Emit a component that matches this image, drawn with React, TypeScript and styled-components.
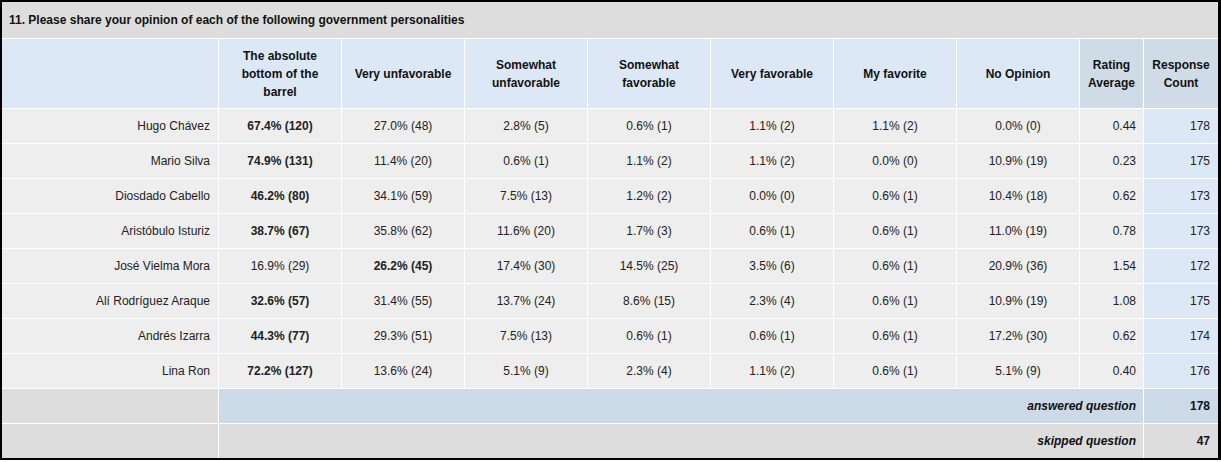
import React from "react";
import styled, { createGlobalStyle } from "styled-components";

const GlobalStyle = createGlobalStyle`
  body {
    margin: 0;
    background: #ffffff;
    font-family: "Liberation Sans", Arial, sans-serif;
    font-size: 12px;
    color: #222222;
  }
`;

const columns = [
  "The absolute bottom of the barrel",
  "Very unfavorable",
  "Somewhat unfavorable",
  "Somewhat favorable",
  "Very favorable",
  "My favorite",
  "No Opinion",
];

type Row = {
  name: string;
  values: string[];
  top: number;
  avg: string;
  count: number;
};

const rows: Row[] = [
  { name: "Hugo Chávez", values: ["67.4% (120)", "27.0% (48)", "2.8% (5)", "0.6% (1)", "1.1% (2)", "1.1% (2)", "0.0% (0)"], top: 0, avg: "0.44", count: 178 },
  { name: "Mario Silva", values: ["74.9% (131)", "11.4% (20)", "0.6% (1)", "1.1% (2)", "1.1% (2)", "0.0% (0)", "10.9% (19)"], top: 0, avg: "0.23", count: 175 },
  { name: "Diosdado Cabello", values: ["46.2% (80)", "34.1% (59)", "7.5% (13)", "1.2% (2)", "0.0% (0)", "0.6% (1)", "10.4% (18)"], top: 0, avg: "0.62", count: 173 },
  { name: "Aristóbulo Isturiz", values: ["38.7% (67)", "35.8% (62)", "11.6% (20)", "1.7% (3)", "0.6% (1)", "0.6% (1)", "11.0% (19)"], top: 0, avg: "0.78", count: 173 },
  { name: "José Vielma Mora", values: ["16.9% (29)", "26.2% (45)", "17.4% (30)", "14.5% (25)", "3.5% (6)", "0.6% (1)", "20.9% (36)"], top: 1, avg: "1.54", count: 172 },
  { name: "Alí Rodríguez Araque", values: ["32.6% (57)", "31.4% (55)", "13.7% (24)", "8.6% (15)", "2.3% (4)", "0.6% (1)", "10.9% (19)"], top: 0, avg: "1.08", count: 175 },
  { name: "Andrés Izarra", values: ["44.3% (77)", "29.3% (51)", "7.5% (13)", "0.6% (1)", "0.6% (1)", "0.6% (1)", "17.2% (30)"], top: 0, avg: "0.62", count: 174 },
  { name: "Lina Ron", values: ["72.2% (127)", "13.6% (24)", "5.1% (9)", "2.3% (4)", "1.1% (2)", "0.6% (1)", "5.1% (9)"], top: 0, avg: "0.40", count: 176 },
];

export default function App() {
  return (
    <>
      <GlobalStyle />
      <Frame>
        <Grid>
          <Title>11. Please share your opinion of each of the following government personalities</Title>

          <HeadCell />
          {columns.map((c) => (
            <HeadCell key={c}>{c}</HeadCell>
          ))}
          <HeadCell $dark>Rating Average</HeadCell>
          <HeadCell $dark>Response Count</HeadCell>

          {rows.map((r) => (
            <React.Fragment key={r.name}>
              <NameCell>{r.name}</NameCell>
              {r.values.map((v, i) => (
                <ValueCell key={i} $bold={i === r.top}>
                  {v}
                </ValueCell>
              ))}
              <AvgCell>{r.avg}</AvgCell>
              <CountCell>{r.count}</CountCell>
            </React.Fragment>
          ))}

          <FootBlank />
          <FootLabel $blue>answered question</FootLabel>
          <FootValue $blue>178</FootValue>

          <FootBlank />
          <FootLabel>skipped question</FootLabel>
          <FootValue>47</FootValue>
        </Grid>
      </Frame>
    </>
  );
}

const Frame = styled.div`
  width: 1221px;
  height: 460px;
  box-sizing: border-box;
  border: 2px solid #000000;
  border-right-width: 3px;
  background: #ffffff;
`;

const Grid = styled.div`
  display: grid;
  grid-template-columns: 216px repeat(7, 122px) 63px 74px;
  grid-template-rows: 36px 69px repeat(10, 34px);
  gap: 1px;
  background: #ffffff;
`;

const Title = styled.div`
  grid-column: 1 / -1;
  display: flex;
  align-items: center;
  padding-left: 7px;
  background: #dddddd;
  font-weight: bold;
  color: #111111;
`;

const HeadCell = styled.div<{ $dark?: boolean }>`
  display: flex;
  align-items: center;
  justify-content: center;
  text-align: center;
  padding: 0 9px;
  line-height: 18px;
  font-weight: bold;
  color: #111111;
  background: ${(p) => (p.$dark ? "#cfdbe7" : "#dce8f6")};
  ${(p) => (p.$dark ? "padding: 0 4px;" : "")}
`;

const Cell = styled.div`
  display: flex;
  align-items: center;
  background: #eeeeee;
  color: #222222;
`;

const NameCell = styled(Cell)`
  justify-content: flex-end;
  padding-right: 8px;
`;

const ValueCell = styled(Cell)<{ $bold?: boolean }>`
  justify-content: center;
  font-weight: ${(p) => (p.$bold ? "bold" : "normal")};
`;

const AvgCell = styled(Cell)`
  justify-content: flex-end;
  padding-right: 7px;
`;

const CountCell = styled(Cell)`
  justify-content: flex-end;
  padding-right: 8px;
  background: #dce8f6;
`;

const FootBlank = styled.div`
  background: #dddddd;
`;

const FootLabel = styled.div<{ $blue?: boolean }>`
  grid-column: 2 / 10;
  display: flex;
  align-items: center;
  justify-content: flex-end;
  padding-right: 7px;
  font-weight: bold;
  font-style: italic;
  color: #111111;
  background: ${(p) => (p.$blue ? "#ccd9e7" : "#dddddd")};
`;

const FootValue = styled.div<{ $blue?: boolean }>`
  display: flex;
  align-items: center;
  justify-content: flex-end;
  padding-right: 8px;
  font-weight: bold;
  color: #111111;
  background: ${(p) => (p.$blue ? "#ccd9e7" : "#dddddd")};
`;
